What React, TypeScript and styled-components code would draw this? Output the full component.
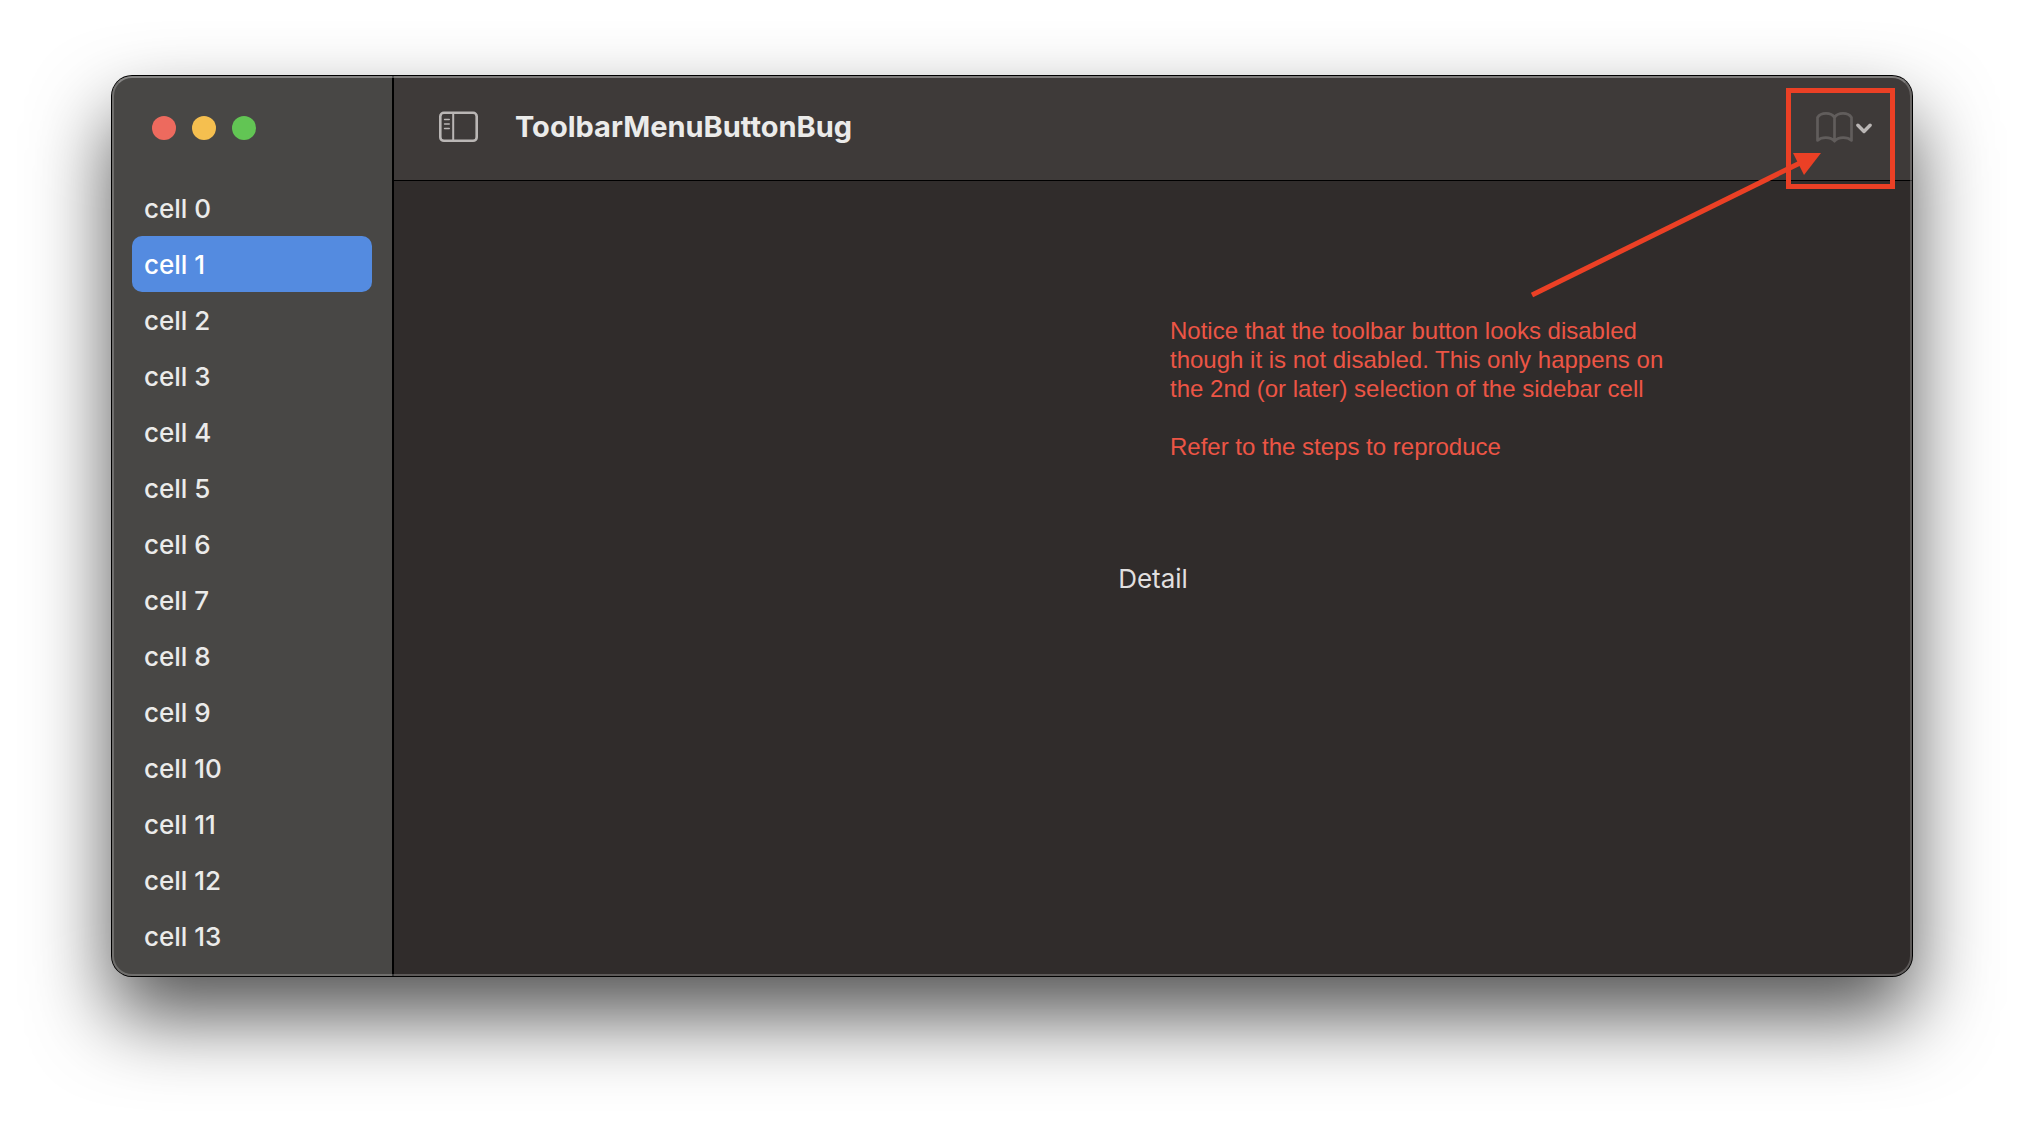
import React, { useState } from "react";
import styled, { createGlobalStyle } from "styled-components";

const GlobalStyle = createGlobalStyle`
  * { box-sizing: border-box; }
  body {
    margin: 0;
    background: #ffffff;
    font-family: Inter, "Liberation Sans", sans-serif;
  }
`;

const Desktop = styled.main`
  padding: 76px 112px 148px;
`;

const AppWindow = styled.div`
  position: relative;
  display: grid;
  grid-template-columns: 280px 1fr;
  border-radius: 20px;
  background: #302c2b;
  box-shadow: 0 0 0 1px #000000, 0 40px 80px rgba(0, 0, 0, 0.68);

  &::after {
    content: "";
    position: absolute;
    inset: 0;
    border: 2px solid rgba(255, 255, 255, 0.22);
    border-top-color: rgba(255, 255, 255, 0.34);
    border-radius: 20px;
    pointer-events: none;
  }
`;

const Sidebar = styled.aside`
  padding-bottom: 12px;
  border-radius: 20px 0 0 20px;
  background: #484745;
`;

const WindowControls = styled.div`
  display: flex;
  align-items: center;
  gap: 16px;
  height: 104px;
  padding: 0 40px;
`;

const Light = styled.button<{ $color: string }>`
  width: 24px;
  height: 24px;
  padding: 0;
  border: 0;
  border-radius: 50%;
  background: ${(p) => p.$color};
`;

const CellList = styled.ul`
  margin: 0;
  padding: 0 20px;
  list-style: none;
`;

const Cell = styled.button<{ $selected: boolean }>`
  display: flex;
  align-items: center;
  width: 100%;
  height: 56px;
  padding: 0 12px;
  border: 0;
  border-radius: 10px;
  background: ${(p) => (p.$selected ? "#548be0" : "transparent")};
  color: ${(p) => (p.$selected ? "#ffffff" : "#ebebea")};
  font-family: inherit;
  font-size: 26px;
  font-weight: 500;
  text-align: left;
`;

const Content = styled.section`
  display: flex;
  flex-direction: column;
  border-left: 2px solid #000000;
`;

const Toolbar = styled.header`
  display: flex;
  align-items: center;
  height: 105px;
  padding: 0 40px 2px 45px;
  border-bottom: 1px solid #000000;
  border-radius: 0 20px 0 0;
  background: #3e3a39;
`;

const ToolButton = styled.button`
  display: flex;
  align-items: center;
  gap: 3px;
  padding: 0;
  border: 0;
  background: none;
`;

const Title = styled.h1`
  flex: 1;
  margin: 0 0 0 36px;
  color: #ebebea;
  font-size: 29px;
  font-weight: 700;
  line-height: 36px;
`;

const Detail = styled.div`
  display: flex;
  flex: 1;
  align-items: center;
  justify-content: center;
  color: #e0dfdf;
  font-size: 26px;
`;

const Highlight = styled.div`
  position: absolute;
  top: 12px;
  right: 17px;
  width: 109px;
  height: 101px;
  border: 5px solid #eb4025;
  pointer-events: none;
`;

const Arrow = styled.svg`
  position: absolute;
  top: 74px;
  right: 88px;
  pointer-events: none;
`;

const Note = styled.div`
  position: absolute;
  top: 240px;
  right: 232px;
  width: 510px;
  color: #ec5545;
  font-family: "Liberation Sans", Arial, sans-serif;
  font-size: 24px;
  line-height: 29px;

  p { margin: 0 0 29px; }
`;

const SidebarIcon = () => (
  <svg width="40" height="32" viewBox="0 0 40 32" fill="none" stroke="#bab6b5" aria-hidden="true">
    <rect x="1.3" y="1.8" width="36.4" height="28" rx="3.6" strokeWidth="2.6" />
    <path d="M14.2 2v28" strokeWidth="2" />
    <path d="M5.600 8.500h4.600M5.600 13h4.600M5.600 17.500h4.600" strokeWidth="1.6" strokeLinecap="round" />
  </svg>
);

const BookIcon = () => (
  <svg width="37" height="32" viewBox="0 0 37 32" fill="none" stroke="#615d5c" strokeWidth="2.7" strokeLinejoin="round" strokeLinecap="round" aria-hidden="true">
    <path d="M18.500 6.400C16.800 3.800 13.600 2.400 10 2.400S3.200 3.800 1.500 6.400V29.400C3.500 27.700 6.500 26.700 9.800 26.700S16.500 27.800 18.500 30.200C20.500 27.800 23.900 26.700 27.200 26.700S33.500 27.700 35.500 29.400V6.400C33.800 3.800 30.500 2.400 27 2.400S20.200 3.800 18.500 6.400V30" />
  </svg>
);

const ChevronIcon = () => (
  <svg width="16" height="16" viewBox="0 0 16 16" fill="none" stroke="#bab6b5" strokeWidth="3.4" strokeLinecap="round" strokeLinejoin="round" aria-hidden="true">
    <path d="M1.900 6.300L8 12.500l6.100-6.200" />
  </svg>
);

const lights = [
  { label: "Close", color: "#ed6a5e" },
  { label: "Minimize", color: "#f5bf4f" },
  { label: "Zoom", color: "#62c554" },
];

const cells = Array.from({ length: 14 }, (_, i) => `cell ${i}`);

export default function App() {
  const [selected, setSelected] = useState(1);

  return (
    <>
      <GlobalStyle />
      <Desktop>
        <AppWindow>
          <Sidebar>
            <WindowControls>
              {lights.map((l) => (
                <Light key={l.label} $color={l.color} aria-label={l.label} />
              ))}
            </WindowControls>
            <CellList>
              {cells.map((name, i) => (
                <li key={name}>
                  <Cell $selected={i === selected} onClick={() => setSelected(i)}>
                    {name}
                  </Cell>
                </li>
              ))}
            </CellList>
          </Sidebar>
          <Content>
            <Toolbar>
              <ToolButton aria-label="Toggle sidebar">
                <SidebarIcon />
              </ToolButton>
              <Title>ToolbarMenuButtonBug</Title>
              <ToolButton aria-label="Book menu">
                <BookIcon />
                <ChevronIcon />
              </ToolButton>
            </Toolbar>
            <Detail>Detail</Detail>
          </Content>
          <Note>
            <p>
              Notice that the toolbar button looks disabled
              <br />
              though it is not disabled. This only happens on
              <br />
              the 2nd (or later) selection of the sidebar cell
            </p>
            <p>Refer to the steps to reproduce</p>
          </Note>
          <Highlight />
          <Arrow width="296" height="150" viewBox="0 0 296 150" aria-hidden="true">
            <path d="M4 145L272 13" stroke="#eb4025" strokeWidth="5" />
            <path d="M265 3h28l-17 22z" fill="#eb4025" />
          </Arrow>
        </AppWindow>
      </Desktop>
    </>
  );
}
